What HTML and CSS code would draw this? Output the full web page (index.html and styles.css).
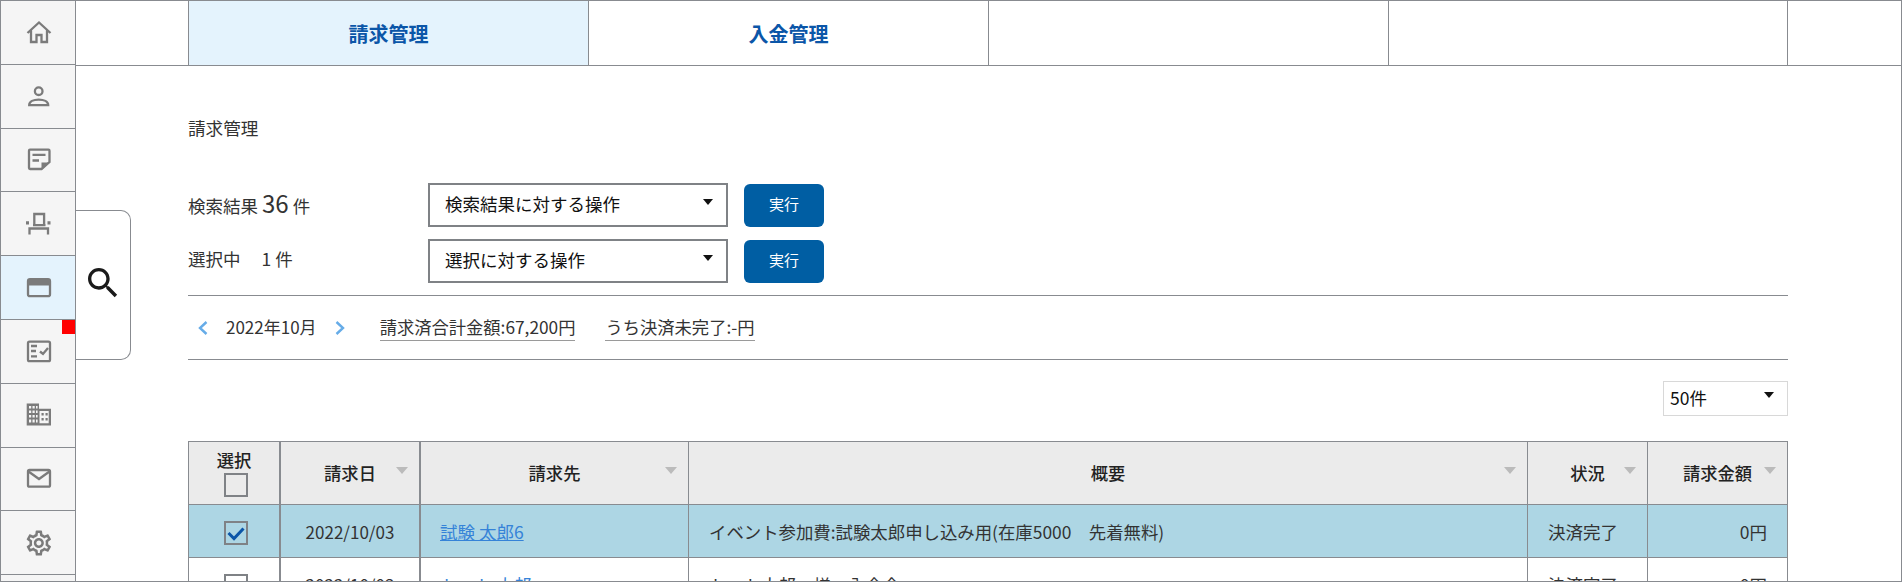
FILE: index.html
```html
<!DOCTYPE html>
<html lang="ja">
<head>
<meta charset="utf-8">
<title>請求管理</title>
<link rel="stylesheet" href="styles.css">
</head>
<body>
<div class="frame">
  <nav class="sidebar">
    <a class="side-item"><svg class="side-icon" viewBox="0 0 30 30"><path class="st" d="M4.500 16 16 5.500 27.500 16M8 13.500V25h5.500v-7h5v7H24V13.500"/></svg></a>
    <a class="side-item"><svg class="side-icon" viewBox="0 0 30 30"><circle class="st" cx="15.700" cy="10.200" r="3.800"/><path class="st" d="M6.200 24.200c0-3.600 4.300-5.600 9.500-5.600s9.500 2 9.500 5.600z"/></svg></a>
    <a class="side-item"><svg class="side-icon" viewBox="0 0 30 30"><path class="st" d="M7 4.700h18.500a1 1 0 0 1 1 1V17L18.500 24H7a1 1 0 0 1-1-1V5.700a1 1 0 0 1 1-1z"/><path class="st" d="M9.500 9.800H22.500M9.500 15.500H16"/><path class="fl" d="M18.500 17.500H26.500L18.500 25z"/></svg></a>
    <a class="side-item"><svg class="side-icon" viewBox="0 0 30 30"><path class="st" d="M11.300 16V5h9.800v11M10 16.200h12.500"/><path class="fl" d="M3 12.200h3v3.300H3zM24.500 12.200h3v3.300h-3z"/><path class="st" d="M6.500 25.500V19.500H25V25.500"/></svg></a>
    <a class="side-item is-active"><svg class="side-icon" viewBox="0 0 30 30"><rect class="st" x="5" y="6.200" width="22" height="17" rx="2"/><path class="fl" d="M5 6.500h22v6H5z"/></svg></a>
    <a class="side-item"><span class="badge"></span><svg class="side-icon" viewBox="0 0 30 30"><rect class="st" x="5" y="5.700" width="22" height="19.500" rx="1.500"/><path class="st" d="M8 10H14M8 15H13M8 20.300H14M17 15.500 20 18 25 12"/></svg></a>
    <a class="side-item"><svg class="side-icon" viewBox="0 0 30 30"><path class="fl" d="M3.700 3.500H16v5.300h12v16.700H3.700z"/><path class="wn" d="M6 6h2.200v2.600H6zM9.500 6h2.200v2.600H9.500zM13 6h1.600v2.600H13zM6 10.500h2.200v2.600H6zM9.500 10.500h2.200v2.600H9.500zM13 10.500h1.600v2.600H13zM6 15h2.200v2.600H6zM9.500 15h2.200v2.600H9.500zM13 15h1.600v2.600H13zM6 19.600h2.200v3H6zM9.500 19.600h2.200v3H9.500zM13 19.600h1.600v3H13zM16.500 11h9.200v12.200h-9.200z"/><path class="fl" d="M18.500 13h2.200v2.400h-2.200zM22.500 13h2.200v2.400h-2.200zM18.500 18h2.200v2.400h-2.200zM22.500 18h2.200v2.400h-2.200z"/></svg></a>
    <a class="side-item"><svg class="side-icon" viewBox="0 0 30 30"><rect class="st" x="5" y="6" width="22" height="16.700" rx="1.500"/><path class="st" d="M5.500 7.500 16 15l10.500-7.500"/></svg></a>
    <a class="side-item"><svg class="side-icon" viewBox="-0.680 0 24 24"><path class="fl" d="M19.430 12.980c.04-.32.07-.64.07-.98 0-.34-.03-.66-.07-.98l2.110-1.650c.19-.15.24-.42.12-.64l-2-3.460c-.09-.16-.26-.25-.44-.25-.06 0-.12.01-.17.03l-2.490 1c-.52-.4-1.080-.73-1.690-.98l-.38-2.650C14.460 2.180 14.250 2 14 2h-4c-.25 0-.46.18-.49.42l-.38 2.650c-.61.25-1.170.59-1.690.98l-2.490-1c-.06-.02-.12-.03-.18-.03-.17 0-.34.09-.43.25l-2 3.460c-.13.22-.07.49.12.64l2.110 1.650c-.04.32-.07.65-.07.98 0 .33.03.66.07.98l-2.110 1.650c-.19.15-.24.42-.12.64l2 3.460c.09.16.26.25.44.25.06 0 .12-.01.17-.03l2.490-1c.52.4 1.080.73 1.690.98l.38 2.650c.03.24.24.42.49.42h4c.25 0 .46-.18.49-.42l.38-2.650c.61-.25 1.170-.59 1.690-.98l2.490 1c.06.02.12.03.18.03.17 0 .34-.09.43-.25l2-3.460c.12-.22.07-.49-.12-.64l-2.110-1.650zm-1.980-1.710c.04.31.05.52.05.73 0 .21-.02.43-.05.73l-.14 1.130.89.7 1.080.84-.7 1.210-1.270-.51-1.040-.42-.9.68c-.43.32-.84.56-1.250.73l-1.060.43-.16 1.130-.2 1.350h-1.400l-.19-1.350-.16-1.130-1.060-.43c-.43-.18-.83-.41-1.230-.71l-.91-.7-1.060.43-1.270.51-.7-1.210 1.080-.84.89-.7-.14-1.130c-.03-.31-.05-.54-.05-.74s.02-.43.05-.73l.14-1.130-.89-.7-1.080-.84.7-1.210 1.270.51 1.040.42.9-.68c.43-.32.84-.56 1.250-.73l1.060-.43.16-1.130.2-1.350h1.390l.19 1.350.16 1.130 1.060.43c.43.18.83.41 1.230.71l.91.7 1.060-.43 1.270-.51.7 1.210-1.070.85-.89.7.14 1.130zM12 8c-2.210 0-4 1.790-4 4s1.790 4 4 4 4-1.790 4-4-1.790-4-4-4zm0 6c-1.100 0-2-.9-2-2s.9-2 2-2 2 .9 2 2-.9 2-2 2z"/></svg></a>
    <a class="side-item"></a>
  </nav>

  <main class="main">
    <div class="tabs">
      <a class="tab is-active">請求管理</a>
      <a class="tab">入金管理</a>
      <a class="tab"></a>
      <a class="tab tab-last"></a>
    </div>

    <button class="search-panel" type="button">
      <svg class="search-icon" viewBox="0 0 24 24"><path d="M15.500 14h-.79l-.28-.27C15.410 12.590 16 11.110 16 9.500 16 5.910 13.090 3 9.500 3S3 5.910 3 9.500 5.910 16 9.500 16c1.610 0 3.090-.59 4.230-1.570l.27.28v.79l5 4.990L20.490 19l-4.990-5zm-6 0C7.010 14 5 11.990 5 9.500S7.010 5 9.500 5 14 7.010 14 9.500 11.990 14 9.500 14z"/></svg>
    </button>

    <div class="content">
      <h1 class="title">請求管理</h1>

      <div class="ops-row first">
        <div class="ops-label">検索結果<span class="count-big">36</span><span class="unit">件</span></div>
        <div class="select"><span>検索結果に対する操作</span><i class="arrow"></i></div>
        <button class="run" type="button">実行</button>
      </div>
      <div class="ops-row second">
        <div class="ops-label">選択中<span class="count">1</span><span class="unit">件</span></div>
        <div class="select"><span>選択に対する操作</span><i class="arrow"></i></div>
        <button class="run" type="button">実行</button>
      </div>

      <div class="summary">
        <svg class="chev" viewBox="0 0 10 14"><path d="M8.500 1 2 7l6.500 6"/></svg>
        <span class="month">2022年10月</span>
        <svg class="chev" viewBox="0 0 10 14"><path d="M1.500 1 8 7l-6.500 6"/></svg>
        <span class="stat stat-a">請求済合計金額:67,200円</span>
        <span class="stat stat-b">うち決済未完了:-円</span>
      </div>

      <div class="pager">
        <div class="per-page"><span>50件</span><i class="arrow"></i></div>
      </div>

      <table class="grid">
        <colgroup>
          <col class="c1"><col class="c2"><col class="c3"><col class="c4"><col class="c5"><col class="c6">
        </colgroup>
        <thead>
          <tr>
            <th class="thick"><div class="sel-title">選択</div><span class="check head-check"></span></th>
            <th class="thick">請求日<i class="sort"></i></th>
            <th>請求先<i class="sort"></i></th>
            <th>概要<i class="sort"></i></th>
            <th>状況<i class="sort"></i></th>
            <th>請求金額<i class="sort"></i></th>
          </tr>
        </thead>
        <tbody>
          <tr class="selected">
            <td class="thick ctr"><span class="check"><svg viewBox="0 0 20 20"><path d="M2.500 10 8 15.500 17.500 5.500"/></svg></span></td>
            <td class="thick ctr date">2022/10/03</td>
            <td class="pad name"><a class="link">試験 太郎6</a></td>
            <td class="pad desc">イベント参加費:試験太郎申し込み用(在庫5000　先着無料)</td>
            <td class="pad">決済完了</td>
            <td class="amt">0円</td>
          </tr>
          <tr>
            <td class="thick ctr"><span class="check"></span></td>
            <td class="thick ctr date">2022/10/03</td>
            <td class="pad name"><a class="link">トート 太郎</a></td>
            <td class="pad desc">トート太郎　様　入金会</td>
            <td class="pad">決済完了</td>
            <td class="amt">0円</td>
          </tr>
        </tbody>
      </table>
    </div>
  </main>
</div>
</body>
</html>
```
FILE: styles.css
```css
* { box-sizing: border-box; }
html, body { margin: 0; padding: 0; background: #fff; }
body {
  font-family: "Noto Sans CJK JP", "Noto Sans", sans-serif;
  font-size: 17.5px;
  color: #333;
}
.frame {
  width: 1902px;
  height: 582px;
  border: 1px solid #888b90;
  display: flex;
  overflow: hidden;
}
.sidebar {
  flex: none;
  width: 75px;
  border-right: 1px solid #888b90;
  background: #f5f5f5;
}
.side-item {
  position: relative;
  display: flex;
  align-items: center;
  justify-content: center;
  height: 63.8px;
  border-bottom: 1px solid #888b90;
}
.side-item.is-active { background: #e4f3fd; }
.side-icon { width: 30px; height: 30px; display: block; }
.st { fill: none; stroke: #7b7b7b; stroke-width: 2.3; }
.fl { fill: #7b7b7b; }
.wn { fill: #f5f5f5; }
.badge {
  position: absolute;
  top: 0;
  right: 0;
  width: 13px;
  height: 14px;
  background: #f00;
}
.main { position: relative; flex: 1; min-width: 0; }
.tabs {
  display: flex;
  height: 65px;
  padding-left: 112px;
  border-bottom: 1px solid #888b90;
}
.tab {
  width: 400px;
  border-left: 1px solid #888b90;
  display: flex;
  align-items: center;
  justify-content: center;
  font-size: 20px;
  font-weight: 700;
  color: #0b56a8;
}
.tab.is-active { background: #e4f3fd; }
.tab-last { border-right: 1px solid #888b90; }
.search-panel {
  position: absolute;
  left: 0;
  top: 209px;
  width: 55px;
  height: 150px;
  padding: 0 0 5px;
  background: #fff;
  border: 1px solid #888b90;
  border-left: 0;
  border-radius: 0 10px 10px 0;
  display: flex;
  align-items: center;
  justify-content: center;
}
.search-icon { width: 40px; height: 40px; flex: none; fill: #1a1a1a; }
.content { padding: 0 113px 0 112px; }
.title {
  margin: 49px 0 0;
  font-size: 17.6px;
  font-weight: 400;
  line-height: 25px;
}
.ops-row { display: flex; align-items: flex-end; height: 44px; }
.ops-row.first { margin-top: 43px; }
.ops-row.second { margin-top: 12px; }
.ops-label { width: 240px; align-self: center; padding-bottom: 6px; display: flex; align-items: baseline; }
.count-big { font-size: 24px; margin: 0 4px 0 4px; }
.count { margin-left: 21px; margin-right: 4px; }
.select {
  position: relative;
  width: 300px;
  height: 44px;
  padding: 0 0 4px 15px;
  border: 2px solid #7f8286;
  background: #fff;
  color: #111;
  display: flex;
  align-items: center;
}
.arrow {
  position: absolute;
  top: 14px;
  right: 13px;
  width: 0;
  height: 0;
  border-left: 5.5px solid transparent;
  border-right: 5.5px solid transparent;
  border-top: 6px solid #111;
}
.run {
  width: 80px;
  height: 43px;
  margin-left: 16px;
  padding: 0 0 4px;
  border: 0;
  border-radius: 6px;
  background: #005ea3;
  color: #fff;
  font-family: inherit;
  font-size: 15px;
}
.summary {
  display: flex;
  align-items: center;
  height: 65px;
  margin-top: 12px;
  padding-left: 10px;
  border-top: 1px solid #888b90;
  border-bottom: 1px solid #888b90;
}
.chev { width: 10px; height: 14px; flex: none; }
.chev path { fill: none; stroke: #66ace8; stroke-width: 2.4; }
.month { margin: 0 18px; padding-bottom: 2px; font-size: 17px; }
.stat { font-size: 17.3px; border-bottom: 1px solid #9a9a9a; line-height: 23px; height: 26px; }
.stat-a { margin-left: 35px; }
.stat-b { margin-left: 30px; }
.pager { display: flex; justify-content: flex-end; margin-top: 21px; }
.per-page {
  position: relative;
  width: 125px;
  height: 35px;
  padding: 0 0 3px 6px;
  border: 1px solid #d8d8d8;
  color: #111;
  display: flex;
  align-items: center;
}
.per-page .arrow { top: 10px; right: 13px; }
.grid {
  margin-top: 25px;
  width: 1600px;
  table-layout: fixed;
  border-collapse: separate;
  border-spacing: 0;
  border-top: 1px solid #888b90;
  border-left: 1px solid #888b90;
}
.c1 { width: 92px; }
.c2 { width: 140px; }
.c3 { width: 268px; }
.c4 { width: 839px; }
.c5 { width: 120px; }
.c6 { width: 140px; }
.grid th, .grid td {
  padding: 0;
  border-right: 1px solid #888b90;
  border-bottom: 1px solid #888b90;
}
.grid th.thick, .grid td.thick { border-right-width: 2px; }
.grid th {
  position: relative;
  height: 63px;
  padding-bottom: 1px;
  background: #ebebeb;
  font-size: 17.3px;
  font-weight: 500;
  text-align: center;
  color: #222;
}
.grid td { height: 53px; }
.grid .date { font-size: 17px; }
.grid .desc { font-size: 17.4px; }
.selected td { background: #add6e4; }
.sel-title { line-height: 20px; margin-top: 1px; }
.sort {
  position: absolute;
  top: 25px;
  right: 11px;
  width: 0;
  height: 0;
  border-left: 6.5px solid transparent;
  border-right: 6.5px solid transparent;
  border-top: 7px solid #bbb;
}
.ctr { text-align: center; }
.grid .pad { padding-left: 20px; }
.grid .name { padding-left: 19px; }
.grid .amt { text-align: right; padding-right: 20px; }
.check {
  display: inline-block;
  width: 24px;
  height: 24px;
  margin-left: 3px;
  vertical-align: middle;
  border: 2px solid #7f8286;
}
.head-check { display: block; margin: 3px auto 0 35px; }
.check svg { display: block; width: 20px; height: 20px; }
.check path { fill: none; stroke: #0b56a8; stroke-width: 3; }
.link { color: #3583d8; text-decoration: underline; }
```
